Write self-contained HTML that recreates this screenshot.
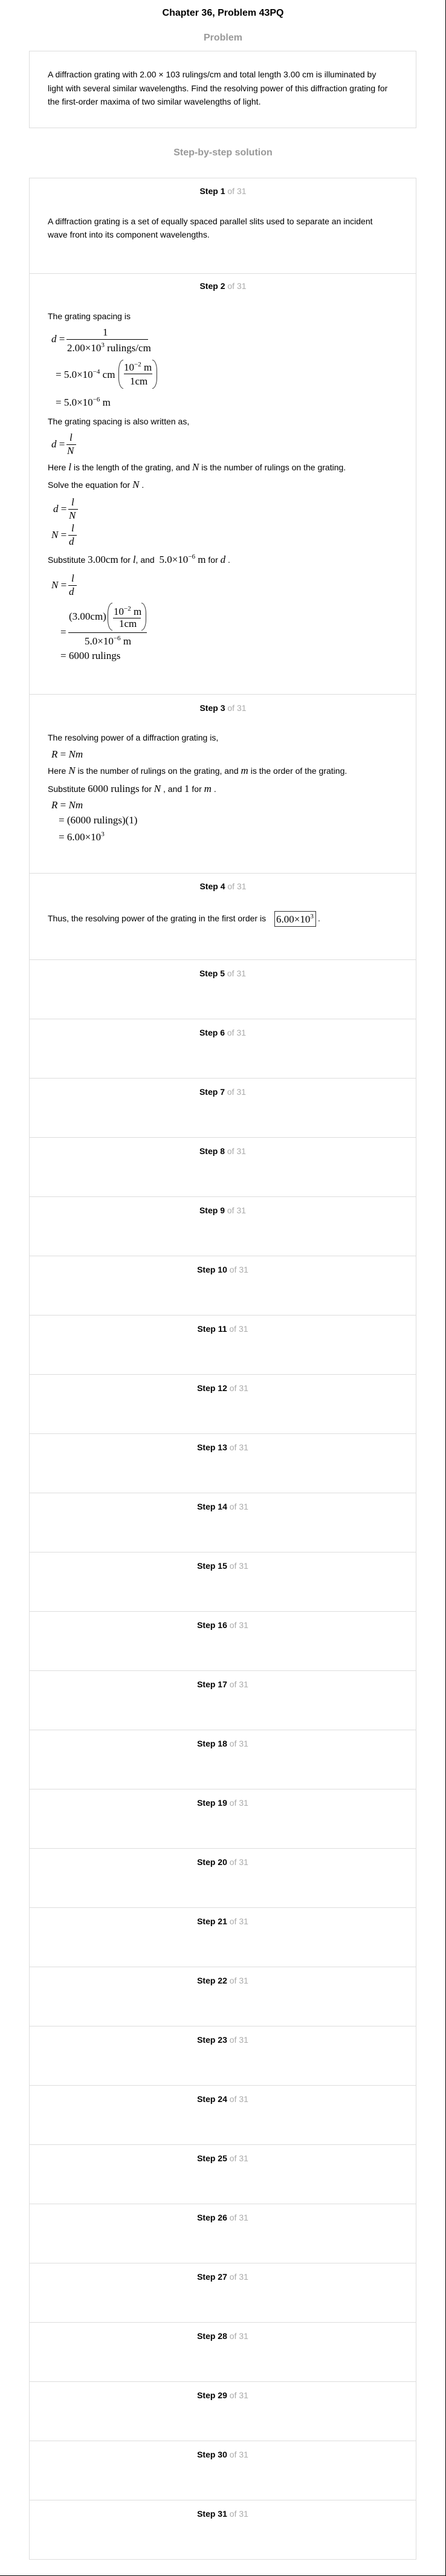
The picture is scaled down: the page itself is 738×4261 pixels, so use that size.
<!DOCTYPE html>
<html><head><meta charset="utf-8"><style>
*{margin:0;padding:0;box-sizing:border-box}
html,body{width:738px;height:4261px;background:#fff;overflow:hidden}
body{position:relative;font-family:"Liberation Sans",Arial,sans-serif;color:#000}
.a{position:absolute;white-space:nowrap;line-height:20px}
.t{font-size:14px}
.m{font-family:"Liberation Serif","Times New Roman",serif;font-size:17px}
.i{font-style:italic}
.h{font-weight:bold;font-size:16px;color:#999;width:738px;text-align:center;left:0}
.lab{position:absolute;left:0;width:738px;text-align:center;font-size:14px;font-weight:bold;line-height:20px}
.lab span{font-weight:normal;color:#aaa}
.box{position:absolute;left:48px;width:641px;border:1px solid #ddd}
.div{position:absolute;left:48px;width:641px;height:1px;background:#ddd}
.ln{position:absolute;height:1px;background:#000}
sup{font-size:11px;vertical-align:7px;line-height:0}
.par{position:absolute;border:1px solid #333;border-radius:10px/22px}
.pl{border-right:none;border-top-right-radius:0;border-bottom-right-radius:0}
.pr{border-left:none;border-top-left-radius:0;border-bottom-left-radius:0}
.es{height:98px;border-top:1px solid #ddd;text-align:center;font-size:14px;font-weight:bold;padding-top:12px;line-height:20px}
.es span{font-weight:normal;color:#aaa}
</style></head><body>

<div class="a" style="left:0;width:738px;text-align:center;top:12px;font-size:16px;font-weight:bold">Chapter 36, Problem 43PQ</div>
<div class="a h" style="top:53px">Problem</div>
<div class="box" style="top:84px;height:128px"></div>
<div class="a t" style="left:79px;top:113px">A diffraction grating with 2.00 × 103 rulings/cm and total length 3.00 cm is illuminated by</div>
<div class="a t" style="left:79px;top:136px">light with several similar wavelengths. Find the resolving power of this diffraction grating for</div>
<div class="a t" style="left:79px;top:158px">the first-order maxima of two similar wavelengths of light.</div>

<div class="a h" style="top:243px">Step-by-step solution</div>
<div class="box" style="top:294px;height:3940px"></div>

<div class="lab" style="top:306px">Step 1 <span>of 31</span></div>
<div class="a t" style="left:79px;top:356px">A diffraction grating is a set of equally spaced parallel slits used to separate an incident</div>
<div class="a t" style="left:79px;top:378px">wave front into its component wavelengths.</div>

<div class="div" style="top:452px"></div>
<div class="lab" style="top:463px">Step 2 <span>of 31</span></div>
<div class="a t" style="left:79px;top:513px">The grating spacing is</div>
<div class="a m" style="left:85px;top:551px"><span class="i">d</span> =</div>
<div class="a m" style="left:170px;top:540px">1</div>
<div class="ln" style="left:110px;top:561px;width:135px"></div>
<div class="a m" style="left:111px;top:566px">2.00×10<sup>3</sup> rulings/cm</div>
<div class="a m" style="left:92px;top:610px">= 5.0×10<sup>−4</sup> cm</div>
<div class="par pl" style="left:196px;top:595px;width:8px;height:48px"></div>
<div class="par pr" style="left:252px;top:595px;width:8px;height:48px"></div>
<div class="a m" style="left:205px;top:598px">10<sup>−2</sup> m</div>
<div class="ln" style="left:205px;top:618px;width:47px"></div>
<div class="a m" style="left:215px;top:621px">1cm</div>
<div class="a m" style="left:92px;top:656px">= 5.0×10<sup>−6</sup> m</div>

<div class="a t" style="left:79px;top:687px">The grating spacing is also written as,</div>
<div class="a m" style="left:85px;top:725px"><span class="i">d</span> =</div>
<div class="a m i" style="left:115px;top:714px">l</div>
<div class="ln" style="left:110px;top:735px;width:16px"></div>
<div class="a m i" style="left:111px;top:736px">N</div>
<div class="a t" style="left:79px;top:763px">Here <span class="m i">l</span> is the length of the grating, and <span class="m i">N</span> is the number of rulings on the grating.</div>
<div class="a t" style="left:79px;top:792px">Solve the equation for <span class="m i">N</span> .</div>
<div class="a m" style="left:88px;top:832px"><span class="i">d</span> =</div>
<div class="a m i" style="left:118px;top:821px">l</div>
<div class="ln" style="left:113px;top:842px;width:16px"></div>
<div class="a m i" style="left:114px;top:843px">N</div>
<div class="a m" style="left:85px;top:875px"><span class="i">N</span> =</div>
<div class="a m i" style="left:118px;top:864px">l</div>
<div class="ln" style="left:113px;top:885px;width:14px"></div>
<div class="a m i" style="left:114px;top:886px">d</div>
<div class="a t" style="left:79px;top:916px">Substitute <span class="m">3.00cm</span> for <span class="m i">l</span>, and &nbsp;<span class="m">5.0×10<sup>−6</sup> m</span> for <span class="m i">d</span> .</div>
<div class="a m" style="left:85px;top:958px"><span class="i">N</span> =</div>
<div class="a m i" style="left:118px;top:947px">l</div>
<div class="ln" style="left:113px;top:968px;width:14px"></div>
<div class="a m i" style="left:114px;top:969px">d</div>
<div class="a m" style="left:114px;top:1010px">(3.00cm)</div>
<div class="par pl" style="left:178px;top:997px;width:8px;height:46px"></div>
<div class="par pr" style="left:234px;top:997px;width:8px;height:46px"></div>
<div class="a m" style="left:188px;top:1002px">10<sup>−2</sup> m</div>
<div class="ln" style="left:187px;top:1022px;width:46px"></div>
<div class="a m" style="left:197px;top:1022px">1cm</div>
<div class="a m" style="left:100px;top:1036px">=</div>
<div class="ln" style="left:113px;top:1046px;width:130px"></div>
<div class="a m" style="left:140px;top:1051px">5.0×10<sup>−6</sup> m</div>
<div class="a m" style="left:100px;top:1075px">= 6000 rulings</div>

<div class="div" style="top:1148px"></div>
<div class="lab" style="top:1161px">Step 3 <span>of 31</span></div>
<div class="a t" style="left:79px;top:1210px">The resolving power of a diffraction grating is,</div>
<div class="a m" style="left:85px;top:1238px"><span class="i">R</span> = <span class="i">Nm</span></div>
<div class="a t" style="left:79px;top:1265px">Here <span class="m i">N</span> is the number of rulings on the grating, and <span class="m i">m</span> is the order of the grating.</div>
<div class="a t" style="left:79px;top:1295px">Substitute <span class="m">6000 rulings</span> for <span class="m i">N</span> , and <span class="m">1</span> for <span class="m i">m</span> .</div>
<div class="a m" style="left:85px;top:1322px"><span class="i">R</span> = <span class="i">Nm</span></div>
<div class="a m" style="left:97px;top:1347px">= (6000 rulings)(1)</div>
<div class="a m" style="left:97px;top:1375px">= 6.00×10<sup>3</sup></div>

<div class="div" style="top:1444px"></div>
<div class="lab" style="top:1456px">Step 4 <span>of 31</span></div>
<div class="a t" style="left:79px;top:1509px">Thus, the resolving power of the grating in the first order is</div>
<div class="a m" style="left:454px;top:1507px;border:1px solid #333;height:26px;width:69px;line-height:26px;padding-left:2px">6.00×10<sup>3</sup></div>
<div class="a t" style="left:526px;top:1509px">.</div>

<div style="position:absolute;left:48px;top:1587px;width:641px">
<div class="es">Step 5 <span>of 31</span></div>
<div class="es">Step 6 <span>of 31</span></div>
<div class="es">Step 7 <span>of 31</span></div>
<div class="es">Step 8 <span>of 31</span></div>
<div class="es">Step 9 <span>of 31</span></div>
<div class="es">Step 10 <span>of 31</span></div>
<div class="es">Step 11 <span>of 31</span></div>
<div class="es">Step 12 <span>of 31</span></div>
<div class="es">Step 13 <span>of 31</span></div>
<div class="es">Step 14 <span>of 31</span></div>
<div class="es">Step 15 <span>of 31</span></div>
<div class="es">Step 16 <span>of 31</span></div>
<div class="es">Step 17 <span>of 31</span></div>
<div class="es">Step 18 <span>of 31</span></div>
<div class="es">Step 19 <span>of 31</span></div>
<div class="es">Step 20 <span>of 31</span></div>
<div class="es">Step 21 <span>of 31</span></div>
<div class="es">Step 22 <span>of 31</span></div>
<div class="es">Step 23 <span>of 31</span></div>
<div class="es">Step 24 <span>of 31</span></div>
<div class="es">Step 25 <span>of 31</span></div>
<div class="es">Step 26 <span>of 31</span></div>
<div class="es">Step 27 <span>of 31</span></div>
<div class="es">Step 28 <span>of 31</span></div>
<div class="es">Step 29 <span>of 31</span></div>
<div class="es">Step 30 <span>of 31</span></div>
<div class="es">Step 31 <span>of 31</span></div>
</div>

<div style="position:absolute;left:737px;top:0;width:1px;height:4261px;background:#000"></div>
<div style="position:absolute;left:0;top:4260px;width:738px;height:1px;background:#000"></div>
</body></html>
